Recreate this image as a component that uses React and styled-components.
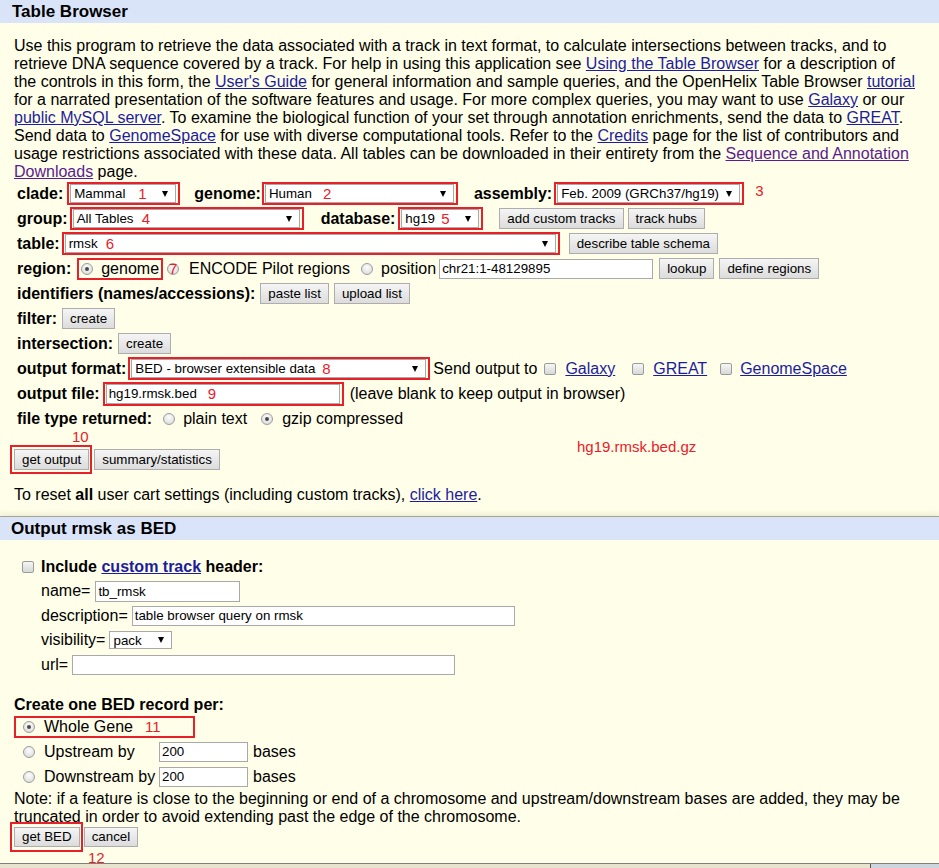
import React from 'react';
import styled, { createGlobalStyle, css } from 'styled-components';

const RED = '#e8202a';

const GlobalStyle = createGlobalStyle`
  html, body { margin: 0; padding: 0; background: #fffee8; }
  body { font-family: "Liberation Sans", Arial, sans-serif; font-size: 16px; color: #000; }
  *, *::before, *::after { box-sizing: border-box; }
`;

const Page = styled.div`
  width: 939px;
  height: 868px;
  overflow: hidden;
  background: #fffee8;
  display: flex;
  flex-direction: column;
`;

const Header = styled.div`
  flex: none;
  height: 23px;
  line-height: 23px;
  background: #d9e4f8;
  padding-left: ${p => p.$indent}px;
  font-size: 17px;
  font-weight: bold;
`;

const Intro = styled.p`
  margin: 0;
  padding: 14px 20px 0 14px;
  line-height: 18px;
`;

const Link = styled.a`
  color: ${p => (p.$visited ? '#5a1d90' : '#1c1c9e')};
  text-decoration: underline;
  font-weight: ${p => (p.$bold ? 'bold' : 'inherit')};
  margin-left: ${p => p.$ml || 0}px;
`;

const Form = styled.div`
  padding-left: 17px;
`;

const Row = styled.div`
  display: flex;
  align-items: center;
  height: ${p => p.$h || 25}px;
  white-space: nowrap;
  padding-left: ${p => p.$pl || 0}px;
  position: relative;
`;

const Label = styled.span`
  font-weight: bold;
  margin-left: ${p => p.$ml || 0}px;
  margin-right: ${p => p.$mr ?? 3}px;
`;

const Text = styled.span`
  margin-left: ${p => p.$ml || 0}px;
  margin-right: ${p => p.$mr || 0}px;
  flex: none;
`;

const Annot = styled.span`
  color: ${RED};
  font-size: 15px;
  line-height: 15px;
  margin-left: ${p => p.$ml || 0}px;
  align-self: ${p => (p.$top ? 'flex-start' : 'center')};
  margin-top: ${p => p.$mt || 0}px;
`;

const AnnotLine = styled.div`
  height: 12px;
  line-height: 12px;
  color: ${RED};
  font-size: 15px;
  padding-left: ${p => p.$pl}px;
`;

const FloatAnnot = styled.span`
  position: absolute;
  left: ${p => p.$x}px;
  top: ${p => p.$y}px;
  color: ${RED};
  font-size: 15px;
  line-height: 17px;
  white-space: nowrap;
`;

const RedBox = styled.span`
  position: relative;
  display: inline-flex;
  align-items: center;
  flex: none;
  border: 2px solid ${RED};
  padding: ${p => p.$pad || '0 2px 0 1px'};
  margin-left: ${p => p.$ml || 0}px;
  margin-right: ${p => p.$mr || 0}px;
`;

const SelectShell = styled.span`
  position: relative;
  display: inline-flex;
  align-items: center;
  justify-content: space-between;
  flex: none;
  width: ${p => p.$w}px;
  height: ${p => p.$h || 19}px;
  background: #fff;
  border: 1px solid #a9a9a9;
  padding: 0 7px 0 3px;
  font-size: 13.33px;
  margin-left: ${p => p.$ml || 0}px;
`;

const Arrow = styled.span`
  width: 0;
  height: 0;
  border-left: 3.5px solid transparent;
  border-right: 3.5px solid transparent;
  border-top: 6px solid #000;
`;

const SelNum = styled.span`
  position: absolute;
  left: ${p => p.$x}px;
  top: 50%;
  transform: translateY(-52%);
  color: ${RED};
  font-size: 15px;
  line-height: 15px;
`;

const Select = ({ w, h, text, num, numX, ml }) => (
  <SelectShell $w={w} $h={h} $ml={ml}>
    <span>{text}</span>
    {num && <SelNum $x={numX}>{num}</SelNum>}
    <Arrow />
  </SelectShell>
);

const Input = styled.input`
  flex: none;
  width: ${p => p.$w}px;
  height: ${p => p.$h || 20}px;
  border: 1px solid #a9a9a9;
  background: #fff;
  padding: 0 2px;
  font-family: "Liberation Sans", Arial, sans-serif;
  font-size: 13.33px;
  color: #000;
  margin-left: ${p => p.$ml || 0}px;
  outline: none;
`;

const InputWrap = styled.span`
  position: relative;
  display: inline-flex;
  flex: none;
`;

const Button = styled.button`
  flex: none;
  height: ${p => p.$h || 21}px;
  padding: 0 7px;
  margin-left: ${p => p.$ml || 0}px;
  border: 1px solid #adadad;
  border-radius: 0;
  background: linear-gradient(#f5f5f5, #dcdcdc);
  font-family: "Liberation Sans", Arial, sans-serif;
  font-size: 13.33px;
  color: #000;
  line-height: 1;
`;

const Radio = styled.span`
  position: relative;
  display: inline-block;
  flex: none;
  width: 12px;
  height: 12px;
  border-radius: 50%;
  border: 1px solid #9c9c9c;
  background: radial-gradient(circle at 50% 35%, #fdfdfd, #d6d6d6);
  margin-left: ${p => p.$ml || 0}px;
  margin-right: ${p => p.$mr || 0}px;
  ${p =>
    p.$checked &&
    css`
      &::after {
        content: '';
        position: absolute;
        left: 3px;
        top: 3px;
        width: 4px;
        height: 4px;
        border-radius: 50%;
        background: #4a4a4a;
      }
    `}
`;

const RadioNum = styled.span`
  position: absolute;
  left: 1px;
  top: -3px;
  color: ${RED};
  font-size: 15px;
  line-height: 15px;
`;

const Checkbox = styled.span`
  display: inline-block;
  flex: none;
  width: 12px;
  height: 12px;
  border: 1px solid #9a9a9a;
  border-radius: 2px;
  background: linear-gradient(#f6f6f6, #d8d8d8);
  margin-left: ${p => p.$ml || 0}px;
  margin-right: ${p => p.$mr || 0}px;
`;

const ButtonRow = styled.div`
  position: relative;
  display: flex;
  align-items: center;
  margin-top: ${p => p.$mt || 0}px;
  padding-left: ${p => p.$pl || 0}px;
`;

const Para = styled.div`
  line-height: 18px;
  padding-left: ${p => p.$pl || 0}px;
  padding-right: 14px;
  margin-top: ${p => p.$mt || 0}px;
`;

const Section2 = styled.div`
  margin-top: 12px;
  border-top: 1px solid #a7a491;
  box-shadow: 0 -3px 5px rgba(120, 115, 80, 0.12);
  display: flex;
  flex-direction: column;
  flex: 1;
`;

const Body2 = styled.div`
  padding: 15px 0 0 14px;
  flex: 1;
`;

const BoldTitle = styled.div`
  font-weight: bold;
  line-height: 18px;
  margin-top: ${p => p.$mt || 0}px;
`;

const OptLabel = styled.span`
  flex: none;
  width: ${p => p.$w || 'auto'};
  margin-left: 9px;
`;

const Footer = styled.div`
  flex: none;
  height: 5px;
  border-top: 1px solid #808080;
  display: flex;
`;

const FooterLeft = styled.div`
  flex: 1;
  background: #e8e3cf;
`;

const FooterRight = styled.div`
  width: 69px;
  border-left: 1px solid #555;
  background: #cfd5de;
`;

export default function App() {
  return (
    <>
      <GlobalStyle />
      <Page>
        <Header $indent={12}>Table Browser</Header>
        <Intro>
          Use this program to retrieve the data associated with a track in text format, to calculate
          intersections between tracks, and to retrieve DNA sequence covered by a track. For help in
          using this application see <Link href="#">Using the Table Browser</Link> for a description of
          the controls in this form, the <Link href="#">User's Guide</Link> for general information and
          sample queries, and the OpenHelix Table Browser <Link href="#">tutorial</Link> for a narrated
          presentation of the software features and usage. For more complex queries, you may want to
          use <Link href="#">Galaxy</Link> or our <Link href="#">public MySQL server</Link>. To examine the
          biological function of your set through annotation enrichments, send the data
          to <Link href="#">GREAT</Link>. Send data to <Link href="#">GenomeSpace</Link> for use with
          diverse computational tools. Refer to the <Link href="#">Credits</Link> page for the list of
          contributors and usage restrictions associated with these data. All tables can be downloaded
          in their entirety from the <Link href="#" $visited>Sequence and Annotation Downloads</Link> page.
        </Intro>

        <Form>
          <Row>
            <Label>clade:</Label>
            <RedBox $ml={1}>
              <Select w={106} text="Mammal" num="1" numX={67} />
            </RedBox>
            <Label $ml={14} $mr={1}>genome:</Label>
            <RedBox>
              <Select w={189} text="Human" num="2" numX={57} />
            </RedBox>
            <Label $ml={16} $mr={2}>assembly:</Label>
            <RedBox>
              <Select w={183} text="Feb. 2009 (GRCh37/hg19)" />
            </RedBox>
            <Annot $ml={11} $top $mt={2}>3</Annot>
          </Row>

          <Row>
            <Label $mr={2}>group:</Label>
            <RedBox>
              <Select w={227} text="All Tables" num="4" numX={68} />
            </RedBox>
            <Label $ml={17} $mr={3}>database:</Label>
            <RedBox>
              <Select w={78} text="hg19" num="5" numX={39} />
            </RedBox>
            <Button $ml={16}>add custom tracks</Button>
            <Button $ml={4}>track hubs</Button>
          </Row>

          <Row>
            <Label $mr={2}>table:</Label>
            <RedBox>
              <Select w={491} text="rmsk" num="6" numX={40} />
            </RedBox>
            <Button $ml={9}>describe table schema</Button>
          </Row>

          <Row>
            <Label $mr={6}>region:</Label>
            <RedBox $pad="0 2px 0 2px">
              <Radio $checked $mr={8} />
              <Text>genome</Text>
            </RedBox>
            <Radio $ml={4}>
              <RadioNum>7</RadioNum>
            </Radio>
            <Text $ml={10}>ENCODE Pilot regions</Text>
            <Radio $ml={11} />
            <Text $ml={8}>position</Text>
            <Input $ml={3} $w={214} defaultValue="chr21:1-48129895" />
            <Button $ml={6}>lookup</Button>
            <Button $ml={5}>define regions</Button>
          </Row>

          <Row>
            <Label $mr={5}>identifiers (names/accessions):</Label>
            <Button>paste list</Button>
            <Button $ml={5}>upload list</Button>
          </Row>

          <Row>
            <Label $mr={5}>filter:</Label>
            <Button>create</Button>
          </Row>

          <Row>
            <Label $mr={5}>intersection:</Label>
            <Button>create</Button>
          </Row>

          <Row>
            <Label $mr={2}>output format:</Label>
            <RedBox>
              <Select w={295} text="BED - browser extensible data" num="8" numX={190} />
            </RedBox>
            <Text $ml={3}>Send output to</Text>
            <Checkbox $ml={7} />
            <Link href="#" $ml={9}>Galaxy</Link>
            <Checkbox $ml={17} />
            <Link href="#" $ml={9}>GREAT</Link>
            <Checkbox $ml={13} />
            <Link href="#" $ml={8}>GenomeSpace</Link>
          </Row>

          <Row>
            <Label $mr={3}>output file:</Label>
            <RedBox>
              <InputWrap>
                <Input $w={234} defaultValue="hg19.rmsk.bed" />
                <SelNum $x={102}>9</SelNum>
              </InputWrap>
            </RedBox>
            <Text $ml={6}>(leave blank to keep output in browser)</Text>
          </Row>

          <Row>
            <Label $mr={8}>file type returned:</Label>
            <Radio $ml={3} />
            <Text $ml={8}>plain text</Text>
            <Radio $ml={14} $checked />
            <Text $ml={9}>gzip compressed</Text>
          </Row>
        </Form>

        <AnnotLine $pl={72}>10</AnnotLine>
        <ButtonRow $mt={2} $pl={10}>
          <RedBox $pad="2px 1px 2px 2px">
            <Button>get output</Button>
          </RedBox>
          <Button $ml={2}>summary/statistics</Button>
          <FloatAnnot $x={577} $y={-7}>hg19.rmsk.bed.gz</FloatAnnot>
        </ButtonRow>

        <Para $pl={14} $mt={12}>
          To reset <b>all</b> user cart settings (including custom tracks), <Link href="#">click here</Link>.
        </Para>

        <Section2>
          <Header $indent={11}>Output rmsk as BED</Header>
          <Body2>
            <Row $h={24}>
              <Checkbox $ml={8} />
              <Label $ml={7}>
                Include <Link href="#" $bold>custom track</Link> header:
              </Label>
            </Row>
            <Row $h={24.5} $pl={27}>
              <Text>name=</Text>
              <Input $ml={5} $w={145} $h={21} defaultValue="tb_rmsk" />
            </Row>
            <Row $h={24.5} $pl={27}>
              <Text>description=</Text>
              <Input $ml={4} $w={383} defaultValue="table browser query on rmsk" />
            </Row>
            <Row $h={24.5} $pl={27}>
              <Text>visibility=</Text>
              <Select ml={4} w={63} h={18} text="pack" />
            </Row>
            <Row $h={24.5} $pl={27}>
              <Text>url=</Text>
              <Input $ml={4} $w={383} />
            </Row>

            <BoldTitle $mt={19}>Create one BED record per:</BoldTitle>

            <Row>
              <RedBox $pad="0 6px 0 7px">
                <Radio $checked />
                <OptLabel>Whole Gene</OptLabel>
                <Annot $ml={12}>11</Annot>
                <Text $ml={26} />
              </RedBox>
            </Row>
            <Row $pl={9}>
              <Radio />
              <OptLabel $w="115px">Upstream by</OptLabel>
              <Input $w={89} defaultValue="200" />
              <Text $ml={5}>bases</Text>
            </Row>
            <Row $pl={9}>
              <Radio />
              <OptLabel $w="115px">Downstream by</OptLabel>
              <Input $w={89} defaultValue="200" />
              <Text $ml={5}>bases</Text>
            </Row>

            <Para $mt={1}>
              Note: if a feature is close to the beginning or end of a chromosome and upstream/downstream
              bases are added, they may be truncated in order to avoid extending past the edge of the
              chromosome.
            </Para>

            <ButtonRow $mt={-4} $pl={0}>
              <RedBox $ml={-4} $pad="3px 1px 3px 2px">
                <Button $h={20}>get BED</Button>
              </RedBox>
              <Button $ml={1} $h={20}>cancel</Button>
              <FloatAnnot $x={74} $y={27}>12</FloatAnnot>
            </ButtonRow>
          </Body2>
          <Footer>
            <FooterLeft />
            <FooterRight />
          </Footer>
        </Section2>
      </Page>
    </>
  );
}
